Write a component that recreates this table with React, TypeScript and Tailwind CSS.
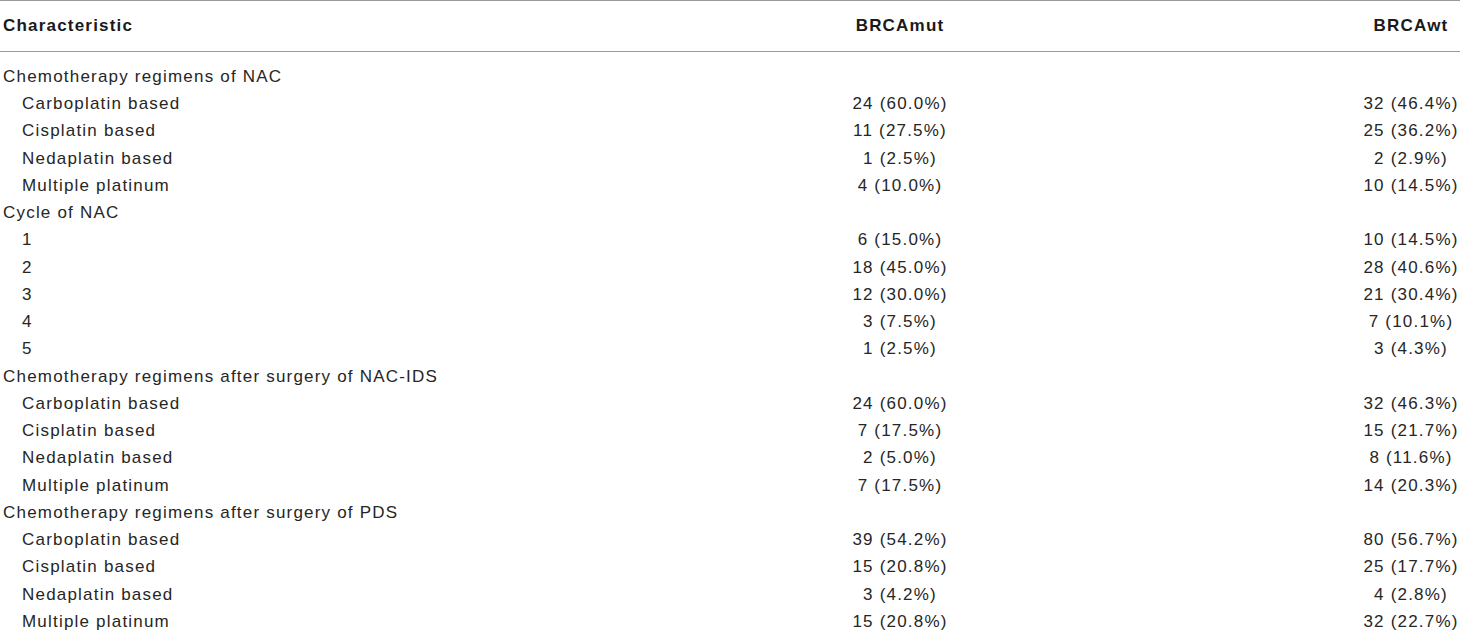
type Row = { label: string; mut?: string; wt?: string; sub?: boolean };

const rows: Row[] = [
  { label: "Chemotherapy regimens of NAC" },
  { label: "Carboplatin based", mut: "24 (60.0%)", wt: "32 (46.4%)", sub: true },
  { label: "Cisplatin based", mut: "11 (27.5%)", wt: "25 (36.2%)", sub: true },
  { label: "Nedaplatin based", mut: "1 (2.5%)", wt: "2 (2.9%)", sub: true },
  { label: "Multiple platinum", mut: "4 (10.0%)", wt: "10 (14.5%)", sub: true },
  { label: "Cycle of NAC" },
  { label: "1", mut: "6 (15.0%)", wt: "10 (14.5%)", sub: true },
  { label: "2", mut: "18 (45.0%)", wt: "28 (40.6%)", sub: true },
  { label: "3", mut: "12 (30.0%)", wt: "21 (30.4%)", sub: true },
  { label: "4", mut: "3 (7.5%)", wt: "7 (10.1%)", sub: true },
  { label: "5", mut: "1 (2.5%)", wt: "3 (4.3%)", sub: true },
  { label: "Chemotherapy regimens after surgery of NAC-IDS" },
  { label: "Carboplatin based", mut: "24 (60.0%)", wt: "32 (46.3%)", sub: true },
  { label: "Cisplatin based", mut: "7 (17.5%)", wt: "15 (21.7%)", sub: true },
  { label: "Nedaplatin based", mut: "2 (5.0%)", wt: "8 (11.6%)", sub: true },
  { label: "Multiple platinum", mut: "7 (17.5%)", wt: "14 (20.3%)", sub: true },
  { label: "Chemotherapy regimens after surgery of PDS" },
  { label: "Carboplatin based", mut: "39 (54.2%)", wt: "80 (56.7%)", sub: true },
  { label: "Cisplatin based", mut: "15 (20.8%)", wt: "25 (17.7%)", sub: true },
  { label: "Nedaplatin based", mut: "3 (4.2%)", wt: "4 (2.8%)", sub: true },
  { label: "Multiple platinum", mut: "15 (20.8%)", wt: "32 (22.7%)", sub: true },
];

export default function App() {
  return (
    <div className="w-[1460px] h-[636px] overflow-hidden bg-white text-[#262626] font-['Liberation_Sans',Arial,sans-serif] text-[17px] tracking-[1.2px]">
      <div className="grid grid-cols-[802px_196px_1fr] items-center h-[52px] border-t border-b border-[#999] font-bold text-[#1a1a1a]">
        <div className="pl-[3px]">Characteristic</div>
        <div className="text-center">BRCAmut</div>
        <div className="flex justify-end">
          <span className="w-[98px] text-center">BRCAwt</span>
        </div>
      </div>
      <div className="pt-[11px]">
        {rows.map((r, i) => (
          <div key={i} className="grid grid-cols-[802px_196px_1fr] items-center h-[27.25px]">
            <div className={r.sub ? "pl-[22px]" : "pl-[3px]"}>{r.label}</div>
            <div className="text-center">{r.mut}</div>
            <div className="flex justify-end">
              <span className="w-[98px] text-center">{r.wt}</span>
            </div>
          </div>
        ))}
      </div>
    </div>
  );
}
